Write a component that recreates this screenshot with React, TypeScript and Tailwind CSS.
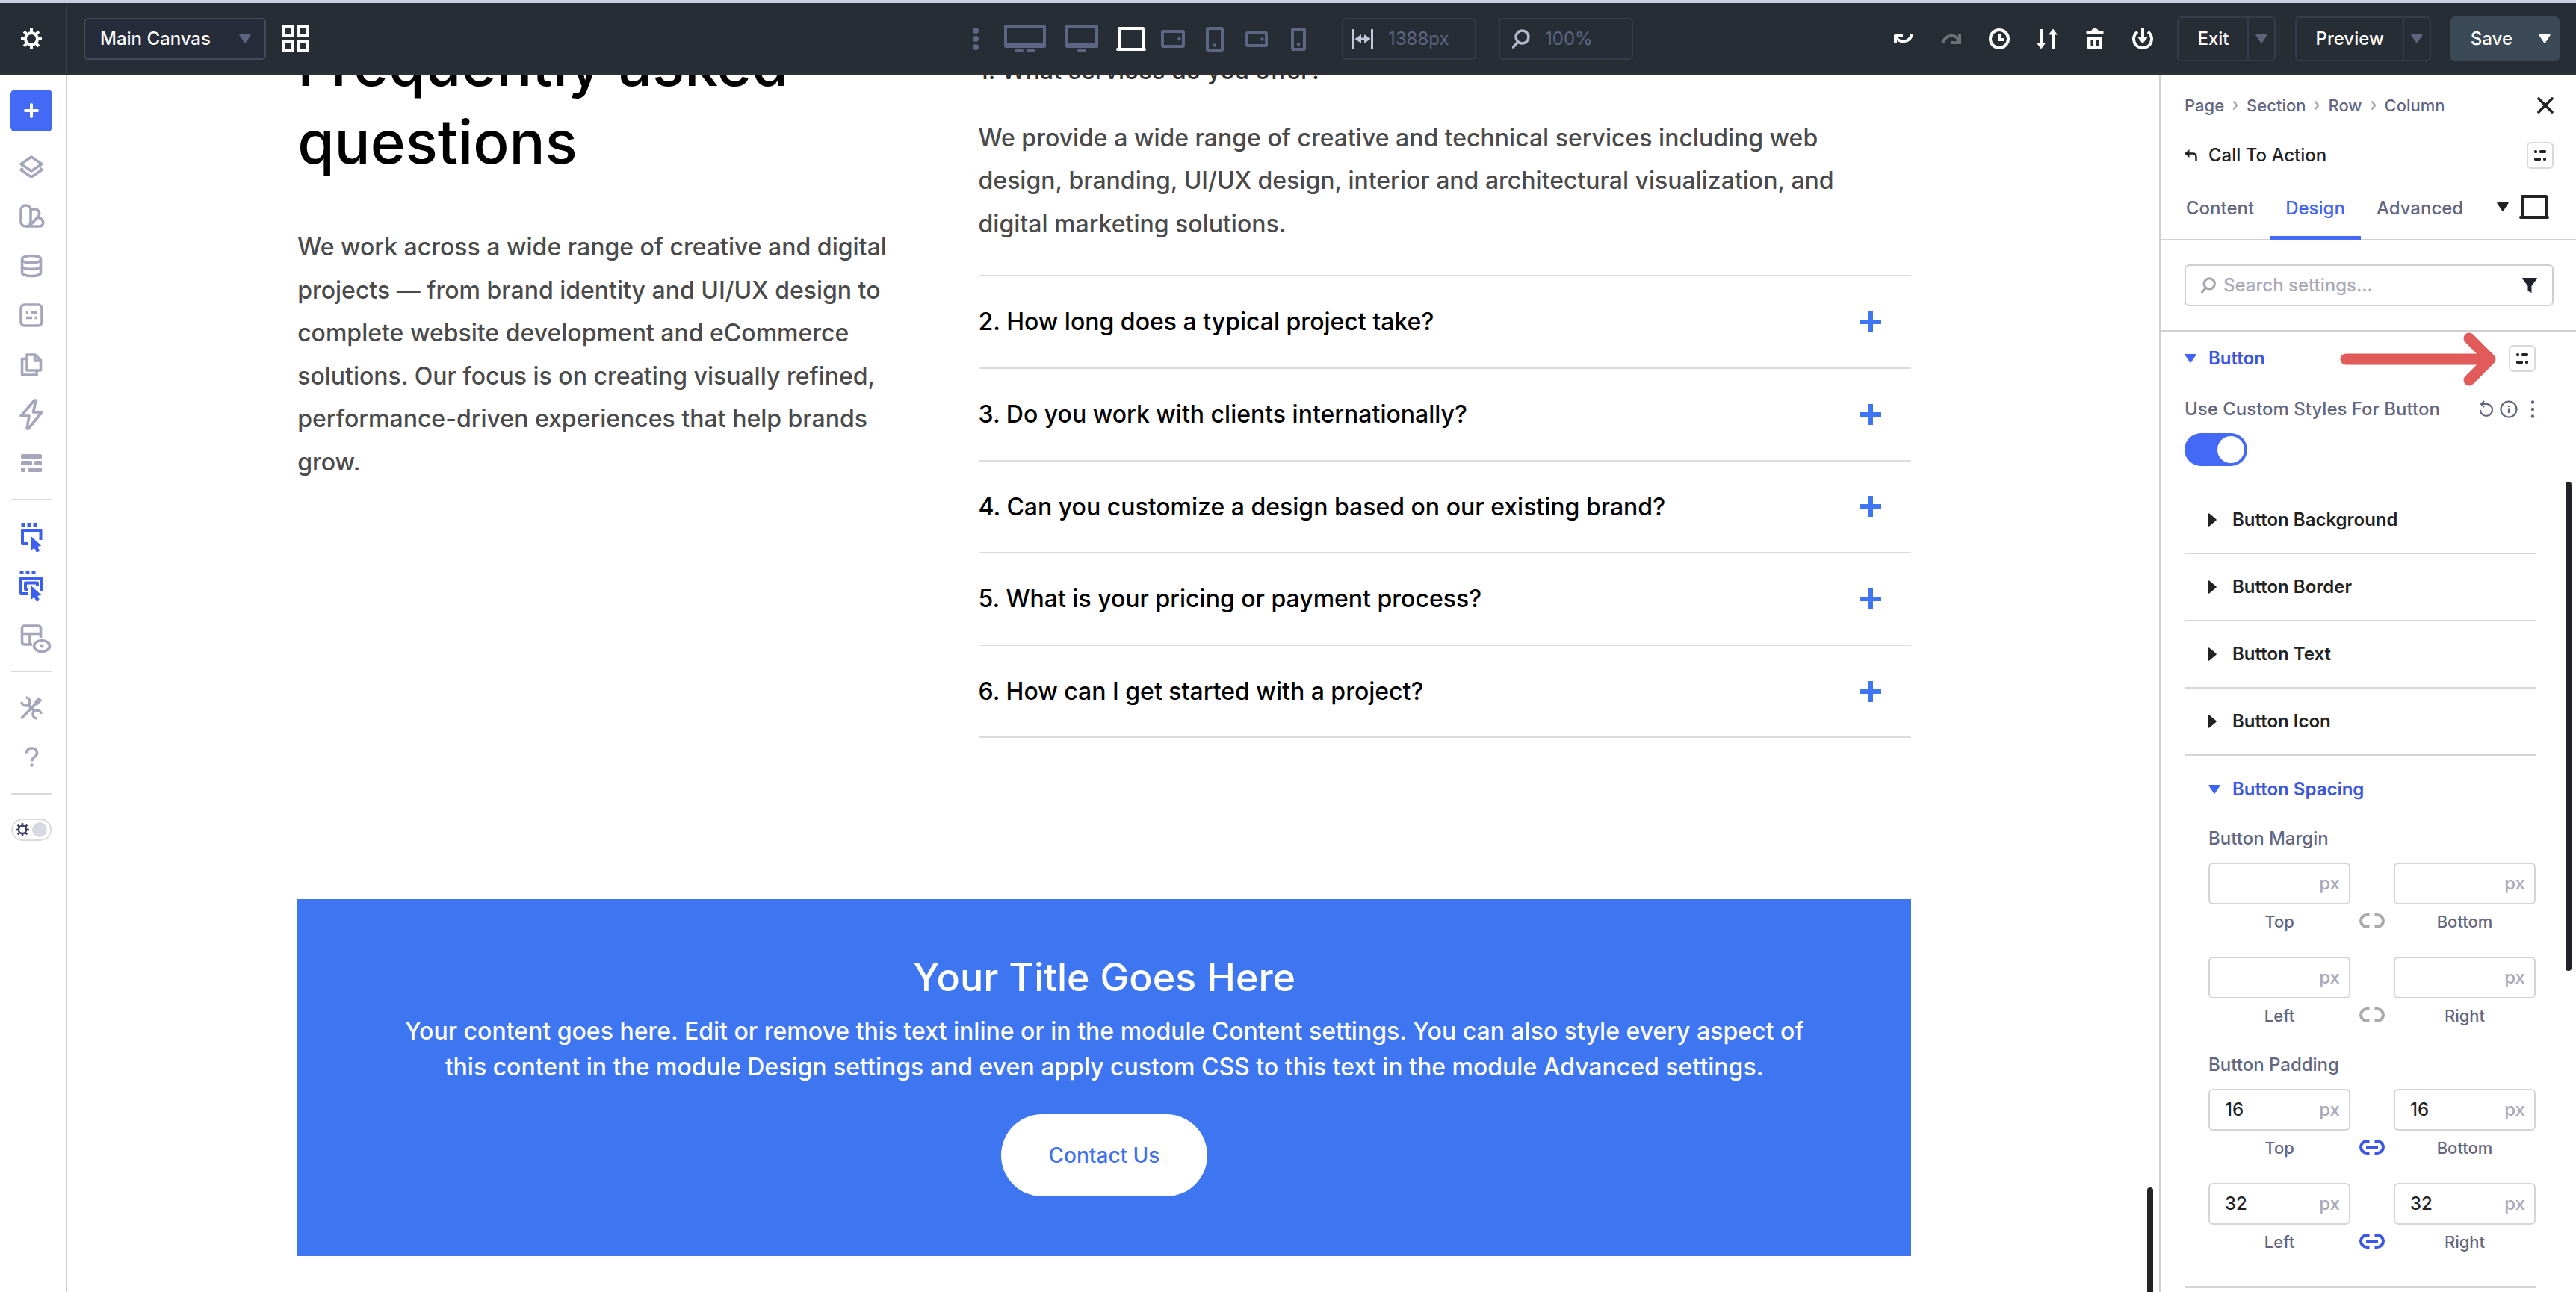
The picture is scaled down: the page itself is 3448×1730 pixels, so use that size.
import { useState, type ReactNode } from 'react'
import clsx from 'clsx'

const faqs = [
  'How long does a typical project take?',
  'Do you work with clients internationally?',
  'Can you customize a design based on our existing brand?',
  'What is your pricing or payment process?',
  'How can I get started with a project?',
]

const groups = ['Button Background', 'Button Border', 'Button Text', 'Button Icon']

function Caret({ className }: { className?: string }) {
  return (
    <svg viewBox="0 0 16 12" className={clsx('h-3 w-4 shrink-0', className)} fill="currentColor">
      <path d="M1 0h14q1.200 0 .5 1.200L9 11q-1 1.300-2 0L.5 1.200Q-.2 0 1 0z" />
    </svg>
  )
}

function CaretRight() {
  return (
    <svg viewBox="0 0 11 18" className="h-[18px] w-[11px]" fill="currentColor">
      <path d="M0 1q0-1.200 1.200-.5l9 7.500q1 1 0 2l-9 7.500Q0 18.200 0 17z" />
    </svg>
  )
}

function Laptop() {
  return (
    <svg viewBox="0 0 40 34" className="h-[34px] w-10" fill="none" stroke="currentColor" strokeWidth="4">
      <path d="M4 30V3h32v27" strokeLinejoin="round" />
      <path d="M2 31h36" strokeLinecap="round" />
    </svg>
  )
}

function Search({ className }: { className?: string }) {
  return (
    <svg viewBox="0 0 24 28" className={clsx('shrink-0', className)} fill="none" stroke="currentColor" strokeWidth="3.600">
      <circle cx="13.500" cy="11.500" r="8.500" />
      <path d="M7.500 18.500l-6 6.500" strokeLinecap="round" />
    </svg>
  )
}

function Presets({ className }: { className?: string }) {
  return (
    <button
      type="button"
      aria-label="Presets"
      className={clsx('flex size-9 items-center justify-center rounded-md border-2 border-[#d9d9dc] bg-white text-[#222]', className)}
    >
      <svg viewBox="0 0 16 14" className="h-[14px] w-4" fill="currentColor">
        <rect x="0" y="0" width="4" height="4" rx="1.500" />
        <rect x="7" y="0" width="9" height="4" rx="1.500" />
        <rect x="0" y="10" width="9" height="4" rx="1.500" />
        <rect x="12" y="10" width="4" height="4" rx="1.500" />
      </svg>
    </button>
  )
}

function Gear({ className }: { className?: string }) {
  return (
    <svg viewBox="0 0 28 28" className={className} stroke="currentColor" fill="none">
      <circle cx="14" cy="14" r="8" strokeWidth="4" />
      <path
        d="M14 0v6M14 22v6M0 14h6M22 14h6M4.100 4.100l4.200 4.200M19.700 19.700l4.200 4.200M4.100 23.900l4.200-4.200M19.700 8.300l4.200-4.200"
        strokeWidth="4"
      />
    </svg>
  )
}

const devices: { label: string; wide?: boolean; active?: boolean; icon: ReactNode }[] = [
  {
    label: 'More breakpoints',
    icon: (
      <svg viewBox="0 0 8 30" className="h-[30px] w-2" fill="currentColor">
        <circle cx="4" cy="4" r="4" />
        <circle cx="4" cy="15" r="4" />
        <circle cx="4" cy="26" r="4" />
      </svg>
    ),
  },
  {
    label: 'Ultra wide',
    wide: true,
    icon: (
      <svg viewBox="0 0 56 38" className="h-[38px] w-14" fill="currentColor">
        <path fillRule="evenodd" d="M2 0h52a2 2 0 0 1 2 2v27a2 2 0 0 1-2 2H2a2 2 0 0 1-2-2V2a2 2 0 0 1 2-2zm2 4v21h48V4z" />
        <rect x="14" y="33" width="12" height="4" rx="2" />
        <rect x="30" y="33" width="12" height="4" rx="2" />
      </svg>
    ),
  },
  {
    label: 'Widescreen',
    wide: true,
    icon: (
      <svg viewBox="0 0 44 38" className="h-[38px] w-11" fill="currentColor">
        <path fillRule="evenodd" d="M2 0h40a2 2 0 0 1 2 2v27a2 2 0 0 1-2 2H2a2 2 0 0 1-2-2V2a2 2 0 0 1 2-2zm2 4v21h36V4z" />
        <rect x="16" y="33" width="12" height="4" rx="2" />
      </svg>
    ),
  },
  { label: 'Desktop', active: true, icon: <Laptop /> },
  {
    label: 'Tablet wide',
    icon: (
      <svg viewBox="0 0 32 24" className="h-6 w-8" fill="none" stroke="currentColor" strokeWidth="4">
        <rect x="2" y="2" width="28" height="20" rx="1" />
        <circle cx="24.500" cy="12" r="2.200" fill="currentColor" stroke="none" />
      </svg>
    ),
  },
  {
    label: 'Tablet',
    icon: (
      <svg viewBox="0 0 24 33" className="h-[33px] w-6" fill="none" stroke="currentColor" strokeWidth="4">
        <rect x="2" y="2" width="20" height="29" rx="1" />
        <circle cx="12" cy="24.500" r="2.200" fill="currentColor" stroke="none" />
      </svg>
    ),
  },
  {
    label: 'Phone wide',
    icon: (
      <svg viewBox="0 0 30 21" className="h-[21px] w-[30px]" fill="none" stroke="currentColor" strokeWidth="4">
        <rect x="2" y="2" width="26" height="17" rx="1" />
        <circle cx="22.500" cy="10.500" r="2.200" fill="currentColor" stroke="none" />
      </svg>
    ),
  },
  {
    label: 'Phone',
    icon: (
      <svg viewBox="0 0 20 31" className="h-[31px] w-5" fill="none" stroke="currentColor" strokeWidth="4">
        <rect x="2" y="2" width="16" height="27" rx="1" />
        <circle cx="10" cy="22.500" r="2.200" fill="currentColor" stroke="none" />
      </svg>
    ),
  },
]

const actions: { label: string; dim?: boolean; icon: ReactNode }[] = [
  {
    label: 'Undo',
    icon: (
      <>
        <path d="M4 11c3 9 18 9 21-3" />
        <path d="M3 8.500v10.500M3 9h10" />
      </>
    ),
  },
  {
    label: 'Redo',
    dim: true,
    icon: (
      <>
        <path d="M2.500 19.500C6 8 20 6 24 17" />
        <path d="M25 8v11H14" />
      </>
    ),
  },
  {
    label: 'History',
    icon: (
      <>
        <circle cx="14" cy="14" r="12" />
        <path d="M14 8v7h6" />
      </>
    ),
  },
  {
    label: 'Portability',
    icon: (
      <>
        <path d="M6 1v20M22 27V7" />
        <path d="M0 19.500h12L6 27.500zM16 8.500h12l-6-8z" fill="currentColor" stroke="none" />
      </>
    ),
  },
  {
    label: 'Clear layout',
    icon: (
      <g fill="currentColor" stroke="none">
        <path d="M2.500 4H9q1-4 5-4t5 4h6.500v4h-23z" />
        <path fillRule="evenodd" d="M4 11h20v15q0 2-2 2H6q-2 0-2-2zm4.500 5v7h3.500v-7zm7 0v7h3.500v-7z" />
      </g>
    ),
  },
  {
    label: 'Save to library',
    icon: (
      <>
        <path d="M7 4.500a12 12 0 1 0 14 0" />
        <path d="M14 0v14" />
        <path d="M7.500 12h13L14 20.500z" fill="currentColor" stroke="none" />
      </>
    ),
  },
]

const tools: { label: string; icon: ReactNode }[] = [
  {
    label: 'Layers',
    icon: (
      <>
        <path d="M18 4l14 9.500-14 9.500L4 13.500z" />
        <path d="M6.500 19L4 21.500 18 31l14-9.500-2.500-2.500" />
      </>
    ),
  },
  {
    label: 'Presets',
    icon: (
      <>
        <rect x="4" y="3" width="13" height="28" rx="6" />
        <path d="M17 10c5-5 14-1 11 7L16 30" />
        <path d="M25 20c8-3 13 10 4 11H11" />
        <path d="M10.500 25v.1" />
      </>
    ),
  },
  {
    label: 'Data',
    icon: (
      <>
        <path d="M5.500 9c0-6 25-6 25 0v18c0 6-25 6-25 0z" />
        <path d="M5.500 10c2 5 23 5 25 0M5.500 19c2 4.500 23 4.500 25 0" />
      </>
    ),
  },
  {
    label: 'Variables',
    icon: (
      <>
        <rect x="4" y="4" width="28" height="28" rx="5" />
        <path d="M11 14.500h2.500M17 14.500h8M11 21.500h8M22.500 21.500H25" />
      </>
    ),
  },
  {
    label: 'Pages',
    icon: (
      <>
        <path d="M12 5h11l7.500 7.500V26H12z" />
        <path d="M22.500 5v8h8" />
        <path d="M12 10.500H5.500V32H25v-6" />
      </>
    ),
  },
  {
    label: 'Interactions',
    icon: <path d="M22 0L4 21h11l-3 17h2L32 16H20.500L24 0z" strokeLinejoin="round" />,
  },
  {
    label: 'Wireframe',
    icon: (
      <g stroke="none" fill="currentColor">
        <rect x="4" y="6" width="28" height="6" rx="1.500" />
        <rect x="4" y="15" width="15" height="6" rx="1.500" />
        <rect x="22" y="15" width="10" height="6" rx="1.500" />
        <rect x="4" y="24" width="6" height="6" rx="1.500" />
        <rect x="14" y="24" width="18" height="6" rx="1.500" />
      </g>
    ),
  },
]

const pointer = 'M18 15l12.500 11.500-5 1 3 6-3.500 1.500-3-6-4 3z'

const modes: { label: string; active?: boolean; icon: ReactNode }[] = [
  {
    label: 'Click mode',
    active: true,
    icon: (
      <>
        <path d="M4.500 2.500h5M12.500 2.500h5M20.500 2.500h5" strokeWidth="5" />
        <path d="M13.500 28H6V10h24.500v13" strokeWidth="4" />
        <path d={pointer} fill="currentColor" transform="translate(0 4)" strokeWidth="1" />
      </>
    ),
  },
  {
    label: 'Hover mode',
    active: true,
    icon: (
      <>
        <path d="M2.500 .5h5M10.500 .5h5M18.500 .5h5" strokeWidth="5" />
        <path d="M13 29H4V8h28v17" strokeWidth="4" />
        <path d="M13 23h-3V14.500h16V19" strokeWidth="4" />
        <path d={pointer} fill="currentColor" transform="translate(0 4)" strokeWidth="1" />
      </>
    ),
  },
  {
    label: 'Show hidden',
    icon: (
      <>
        <path d="M19 31H9q-3.500 0-3.500-3.500V9Q5.500 6 9 6h18q3.500 0 3.500 3.500V22M5.500 16.500h25M16 16.500V31" />
        <ellipse cx="32" cy="33" rx="10.500" ry="7.500" />
        <circle cx="32" cy="33" r="2.500" fill="currentColor" stroke="none" />
      </>
    ),
  },
]

function Rule() {
  return <div className="my-[15px] h-0.5 w-[54px] bg-[#d9d9dd]" />
}

function RailButton({ label, active, children }: { label: string; active?: boolean; children: ReactNode }) {
  return (
    <button
      type="button"
      aria-label={label}
      className={clsx('flex h-[66px] w-full items-center justify-center', active ? 'text-[#3d5ff0]' : 'text-[#a5a6bb]')}
    >
      <svg viewBox="0 0 36 36" className="size-9 overflow-visible" fill="none" stroke="currentColor" strokeWidth="3.600" strokeLinejoin="round">
        {children}
      </svg>
    </button>
  )
}

function Rail() {
  return (
    <aside className="flex w-[90px] shrink-0 flex-col items-center border-r-2 border-[#cfcfd3] bg-white pt-5 pr-1">
      <button type="button" aria-label="Add" className="mb-[15px] flex size-14 shrink-0 items-center justify-center rounded-md bg-[#4469f7] text-white">
        <svg viewBox="0 0 20 20" className="size-5" stroke="currentColor" strokeWidth="4" strokeLinecap="round">
          <path d="M10 2v16M2 10h16" />
        </svg>
      </button>
      {tools.map((tool) => (
        <RailButton key={tool.label} label={tool.label}>
          {tool.icon}
        </RailButton>
      ))}
      <Rule />
      {modes.map((mode) => (
        <RailButton key={mode.label} label={mode.label} active={mode.active}>
          {mode.icon}
        </RailButton>
      ))}
      <Rule />
      <RailButton label="Settings">
        <path d="M5.500 31L25 11" strokeWidth="3.600" strokeLinecap="round" />
        <path d="M24 12l6-6.500" strokeWidth="6.500" />
        <path d="M13 13l10 10" strokeWidth="4" />
        <path d="M11 4a5.500 5.500 0 1 1-6 6" strokeWidth="3.600" />
        <path d="M25 32a5.500 5.500 0 1 1 6-6" strokeWidth="3.600" />
      </RailButton>
      <RailButton label="Help">
        <path d="M11.500 12.500c0-9 14-9 14 0 0 5-7 5-7 11" />
        <circle cx="18.500" cy="28.500" r="2.300" fill="currentColor" stroke="none" />
      </RailButton>
      <Rule />
      <label className="mt-[17px] flex h-[30px] w-[54px] items-center justify-between rounded-full border-2 border-[#dcdce0] px-1 text-[#3d4266]">
        <input type="checkbox" aria-label="Dark mode" className="sr-only" />
        <Gear className="size-[18px]" />
        <span className="size-5 rounded-full bg-[#d5dae2]" />
      </label>
    </aside>
  )
}

function SplitButton({ label, solid }: { label: string; solid?: boolean }) {
  return (
    <div
      className={clsx(
        'flex h-[60px] rounded-md border-2 font-medium',
        solid ? 'border-[#3c4956] bg-[#3c4956] text-white' : 'border-[#363c4b] text-white',
      )}
    >
      <button type="button" className="px-[25px]">
        {label}
      </button>
      <button
        type="button"
        aria-label={`${label} options`}
        className={clsx('flex w-9 items-center justify-center', !solid && 'border-l-2 border-[#363c4b] text-[#62647e]')}
      >
        <Caret className="w-3" />
      </button>
    </div>
  )
}

function TopBar() {
  return (
    <header className="flex h-[100px] shrink-0 items-center border-t-4 border-b-2 border-t-[#c9cfe2] border-b-[#302f31] bg-[#272d35] pt-0.5 text-[24px] text-white">
      <div className="flex flex-1 items-center self-stretch">
        <button type="button" aria-label="Builder settings" className="flex w-[90px] items-center justify-center self-stretch border-r-2 border-[#353c4c] pr-1">
          <Gear className="size-7" />
        </button>
        <div className="relative ml-[22px]">
          <select aria-label="Canvas" className="h-14 w-[244px] appearance-none rounded-md border-2 border-[#444b5b] bg-[#262c3a] pl-5 font-medium">
            <option>Main Canvas</option>
          </select>
          <Caret className="pointer-events-none absolute top-[22px] right-5 text-[#5d6684]" />
        </div>
        <button type="button" aria-label="All canvases" className="ml-[22px]">
          <svg viewBox="0 0 36 36" className="size-9" fill="none" stroke="currentColor" strokeWidth="4">
            <path d="M2 2h12v12H2zM22 2h12v12H22zM2 22h12v12H2zM22 22h12v12H22z" />
          </svg>
        </button>
      </div>

      <div className="flex items-center pl-[38px] text-[#5d6684]">
        {devices.map((device) => (
          <button
            key={device.label}
            type="button"
            aria-label={device.label}
            className={clsx('flex h-14 items-center justify-center', device.wide ? 'w-[76px]' : 'w-14', device.active && 'text-white')}
          >
            {device.icon}
          </button>
        ))}
        <label className="ml-[30px] flex h-14 w-[180px] items-center gap-5 rounded-md border-2 border-[#363c4b] pl-3">
          <svg viewBox="0 0 28 28" className="size-7 shrink-0 text-[#c3c8d8]" stroke="currentColor" fill="currentColor">
            <path d="M1.500 1v26M26.500 1v26M8 14h12" strokeWidth="3" />
            <path d="M3.500 14l8.500-6v12zM24.500 14L16 8v12z" stroke="none" />
          </svg>
          <input aria-label="Canvas width" defaultValue="1388px" className="w-full min-w-0 bg-transparent outline-none" />
        </label>
        <label className="ml-[30px] flex h-14 w-[180px] items-center gap-5 rounded-md border-2 border-[#363c4b] pl-4">
          <Search className="h-7 w-6 text-[#b3b8ca]" />
          <input aria-label="Zoom" defaultValue="100%" className="w-full min-w-0 bg-transparent outline-none" />
        </label>
      </div>

      <div className="flex flex-1 items-center justify-end gap-[26px] pr-[22px]">
        <div className="-mr-3 flex">
          {actions.map((action) => (
            <button
              key={action.label}
              type="button"
              aria-label={action.label}
              className={clsx('flex h-14 w-16 items-center justify-center', action.dim && 'text-[#6d7277]')}
            >
              <svg viewBox="0 0 28 28" className="size-7" fill="none" stroke="currentColor" strokeWidth="4">
                {action.icon}
              </svg>
            </button>
          ))}
        </div>
        <SplitButton label="Exit" />
        <SplitButton label="Preview" />
        <SplitButton label="Save" solid />
      </div>
    </header>
  )
}

function Canvas() {
  return (
    <main className="relative min-w-0 flex-1 overflow-hidden bg-white pr-6 text-[32px] font-medium">
      <div className="mx-auto -mt-[66px] w-[77.8%]">
        <section className="flex justify-between">
          <div className="w-[37%]">
            <h1 className="text-[80px] leading-[1.3] text-black">Frequently asked questions</h1>
            <p className="mt-[60px] leading-[1.8] text-[#4a4a4a]">
              We work across a wide range of creative and digital projects — from brand identity and UI/UX design to complete website development and eCommerce
              solutions. Our focus is on creating visually refined, performance-driven experiences that help brands grow.
            </p>
          </div>
          <div className="w-[57.8%] pt-8">
            <div className="border-b-2 border-[#dcdcdc] pb-10">
              <h2 className="leading-[1.8] text-[#333]">1. What services do you offer?</h2>
              <p className="mt-8 pr-20 leading-[1.8] text-[#4a4a4a]">
                We provide a wide range of creative and technical services including web design, branding, UI/UX design, interior and architectural visualization, and
                digital marketing solutions.
              </p>
            </div>
            {faqs.map((question, i) => (
              <button
                key={question}
                type="button"
                className="flex w-full items-center justify-between border-b-2 border-[#dcdcdc] py-8 pr-10 text-left leading-[1.8] text-black"
              >
                {i + 2}. {question}
                <svg viewBox="0 0 28 28" className="size-7 text-[#3d75f2]" stroke="currentColor" strokeWidth="6">
                  <path d="M14 0v28M0 14h28" />
                </svg>
              </button>
            ))}
          </div>
        </section>

        <section className="mt-[216px] flex flex-col items-center bg-[#3e76f2] px-32 pt-[73px] pb-20 text-center text-white">
          <h2 className="text-[52px] leading-[64px]">Your Title Goes Here</h2>
          <p className="mt-4 leading-[48px]">
            Your content goes here. Edit or remove this text inline or in the module Content settings. You can also style every aspect of this content in the module
            Design settings and even apply custom CSS to this text in the module Advanced settings.
          </p>
          <a href="#contact" className="mt-[39px] rounded-full bg-white px-16 py-8 text-[28px] leading-[46px] text-[#3e6ff0]">
            Contact Us
          </a>
        </section>
      </div>
      <div className="absolute right-2 bottom-0 h-[140px] w-2 rounded-t-full bg-[#222327]" />
    </main>
  )
}

function UnitField({ label, id, value }: { label: string; id: string; value?: string }) {
  return (
    <div className="flex w-[190px] flex-col">
      <div className="flex h-14 items-center rounded-md border-2 border-[#d5d5d8] pr-3 pl-5">
        <input id={id} defaultValue={value} className="w-full min-w-0 text-[#222] outline-none" />
        <span className="text-[#aaa9b8]">px</span>
      </div>
      <label htmlFor={id} className="mt-2 text-center text-[22px] leading-[30px]">
        {label}
      </label>
    </div>
  )
}

function LinkToggle({ linked }: { linked?: boolean }) {
  return (
    <button type="button" aria-label="Link values" className={clsx('mb-1.5', linked ? 'text-[#3c56e8]' : 'text-[#aaa]')}>
      <svg viewBox="0 0 36 20" className="h-5 w-9" fill="none" stroke="currentColor" strokeWidth="4">
        <path d="M14.500 2H11a8 8 0 0 0 0 16h3.500M21.500 2H25a8 8 0 0 1 0 16h-3.500" />
        {linked && <path d="M10 10h16" />}
      </svg>
    </button>
  )
}

function Sides({ title, linked, y, x }: { title: string; linked?: boolean; y?: string; x?: string }) {
  const rows = [
    ['Top', 'Bottom', y],
    ['Left', 'Right', x],
  ]
  return (
    <fieldset className="mb-9 pl-8">
      <legend className="mb-[17px] leading-[30px]">{title}</legend>
      <div className="flex flex-col gap-8">
        {rows.map(([a, b, value]) => (
          <div key={a} className="flex items-end justify-between">
            <UnitField label={a!} id={`${title}-${a}`} value={value} />
            <LinkToggle linked={linked} />
            <UnitField label={b!} id={`${title}-${b}`} value={value} />
          </div>
        ))}
      </div>
    </fieldset>
  )
}

function Panel() {
  const [tab, setTab] = useState('Design')
  const [custom, setCustom] = useState(true)

  return (
    <aside className="relative flex w-[558px] shrink-0 flex-col overflow-hidden border-l-2 border-[#cfcfd3] bg-white text-[24px] font-medium text-[#63667f]">
      <div className="flex items-center justify-between pt-6 pr-[30px] pl-8">
        <nav className="flex items-center gap-[11px] text-[22px] leading-[34px]">
          {['Page', 'Section', 'Row', 'Column'].map((crumb, i) => (
            <span key={crumb} className="flex items-center gap-[11px]">
              {i > 0 && (
                <svg viewBox="0 0 8 14" className="h-[14px] w-2 text-[#aaa]" fill="none" stroke="currentColor" strokeWidth="2.500">
                  <path d="M1.500 1.500L6 7l-4.500 5.500" />
                </svg>
              )}
              <a href={`#${crumb}`}>{crumb}</a>
            </span>
          ))}
        </nav>
        <button type="button" aria-label="Close" className="text-[#222]">
          <svg viewBox="0 0 22 22" className="size-[22px]" stroke="currentColor" strokeWidth="3.600" strokeLinecap="round">
            <path d="M2 2l18 18M20 2L2 20" />
          </svg>
        </button>
      </div>

      <div className="mt-8 flex items-center pr-[30px] pl-8">
        <button type="button" aria-label="Back" className="text-[#222]">
          <svg viewBox="0 0 17 17" className="size-[17px]" fill="none" stroke="currentColor" strokeWidth="2.500">
            <path d="M4 5.500h7q4.500 0 4.500 4.500v6" />
            <path d="M0 5.500L6.500 0v11z" fill="currentColor" stroke="none" />
          </svg>
        </button>
        <h2 className="ml-[15px] text-[#222]">Call To Action</h2>
        <Presets className="ml-auto" />
      </div>

      <div className="mt-2 flex h-[88px] items-center border-b-2 border-[#cfcfd3] pr-9 pl-[13px]">
        {['Content', 'Design', 'Advanced'].map((name) => (
          <button
            key={name}
            type="button"
            onClick={() => setTab(name)}
            className={clsx('-mb-0.5 h-[88px] border-b-[6px] px-[21px] pt-2', tab === name ? 'border-[#4469f7] text-[#3f63f4]' : 'border-transparent')}
          >
            {name}
          </button>
        ))}
        <button type="button" aria-label="Breakpoint" className="ml-auto flex items-center gap-[14px] text-[#222]">
          <Caret className="w-3.5" />
          <Laptop />
        </button>
      </div>

      <div className="border-b-2 border-[#cfcfd3] py-8 pr-[30px] pl-8">
        <div className="flex h-14 items-center rounded-md border-2 border-[#cfcfd3] px-5">
          <Search className="h-6 w-5 text-[#a3a5ad]" />
          <input type="search" aria-label="Search settings" placeholder="Search settings..." className="ml-2.5 w-full min-w-0 outline-none placeholder:text-[#aaa9b8]" />
          <button type="button" aria-label="Filter" className="text-[#1e222b]">
            <svg viewBox="0 0 20 20" className="size-5" fill="currentColor">
              <path d="M1 0h18q1.500 0 .7 1.300L12.500 11v9l-5-2.500V11L.3 1.300Q-.5 0 1 0z" />
            </svg>
          </button>
        </div>
      </div>

      <div className="pr-[54px] pl-8">
        <div className="flex h-[72px] items-center">
          <Caret className="text-[#3f63f4]" />
          <h3 className="ml-4 font-semibold text-[#3a55e0]">Button</h3>
          <svg viewBox="0 0 210 72" className="ml-auto h-[72px] w-[210px] overflow-visible" fill="none" stroke="#e15b5b" strokeWidth="15" strokeLinecap="round" strokeLinejoin="round">
            <path d="M8 37h192M173 9l28 28-28 28" />
          </svg>
          <Presets className="ml-4" />
        </div>
        <div className="mt-3.5 flex items-center">
          <label htmlFor="custom-styles" className="leading-9">
            Use Custom Styles For Button
          </label>
          <div className="ml-auto flex items-center gap-2">
            <svg viewBox="0 0 20 24" className="h-6 w-5" fill="none" stroke="currentColor" strokeWidth="2.200">
              <path d="M2 13a8 8 0 1 0 7-8H3M7 1L3 5l4 4" />
            </svg>
            <svg viewBox="0 0 24 24" className="size-6" fill="none" stroke="currentColor" strokeWidth="2.200">
              <circle cx="12" cy="12" r="10.500" />
              <path d="M12 10.500V17M12 7v2" />
            </svg>
            <svg viewBox="0 0 16 24" className="h-6 w-4" fill="currentColor">
              <circle cx="12" cy="2.500" r="2.200" />
              <circle cx="12" cy="12" r="2.200" />
              <circle cx="12" cy="21.500" r="2.200" />
            </svg>
          </div>
        </div>
        <label className={clsx('mt-3.5 flex h-11 w-[84px] items-center rounded-full p-1', custom ? 'justify-end bg-[#4469f7]' : 'bg-[#cfcfd3]')}>
          <input id="custom-styles" type="checkbox" checked={custom} onChange={(e) => setCustom(e.target.checked)} className="sr-only" />
          <span className="size-9 rounded-full bg-white" />
        </label>

        <div className="mt-7">
          {groups.map((group) => (
            <button key={group} type="button" className="flex h-[90px] w-full items-center gap-[21px] border-b-2 border-[#d5d5d8] pl-8 font-semibold text-[#222]">
              <CaretRight />
              {group}
            </button>
          ))}
          <button type="button" className="flex h-[90px] w-full items-center gap-4 pl-8 font-semibold text-[#3a55e0]">
            <Caret className="text-[#3f63f4]" />
            Button Spacing
          </button>
        </div>

        <div className="mt-1.5 border-b-2 border-[#d5d5d8] pb-2">
          <Sides title="Button Margin" />
          <Sides title="Button Padding" linked y="16" x="32" />
        </div>
      </div>
      <div className="absolute top-[545px] right-1.5 h-[655px] w-2 rounded-full bg-[#222327]" />
    </aside>
  )
}

export default function App() {
  return (
    <div className="flex h-screen flex-col overflow-hidden bg-white font-['Inter',sans-serif]">
      <TopBar />
      <div className="flex min-h-0 flex-1">
        <Rail />
        <Canvas />
        <Panel />
      </div>
    </div>
  )
}
